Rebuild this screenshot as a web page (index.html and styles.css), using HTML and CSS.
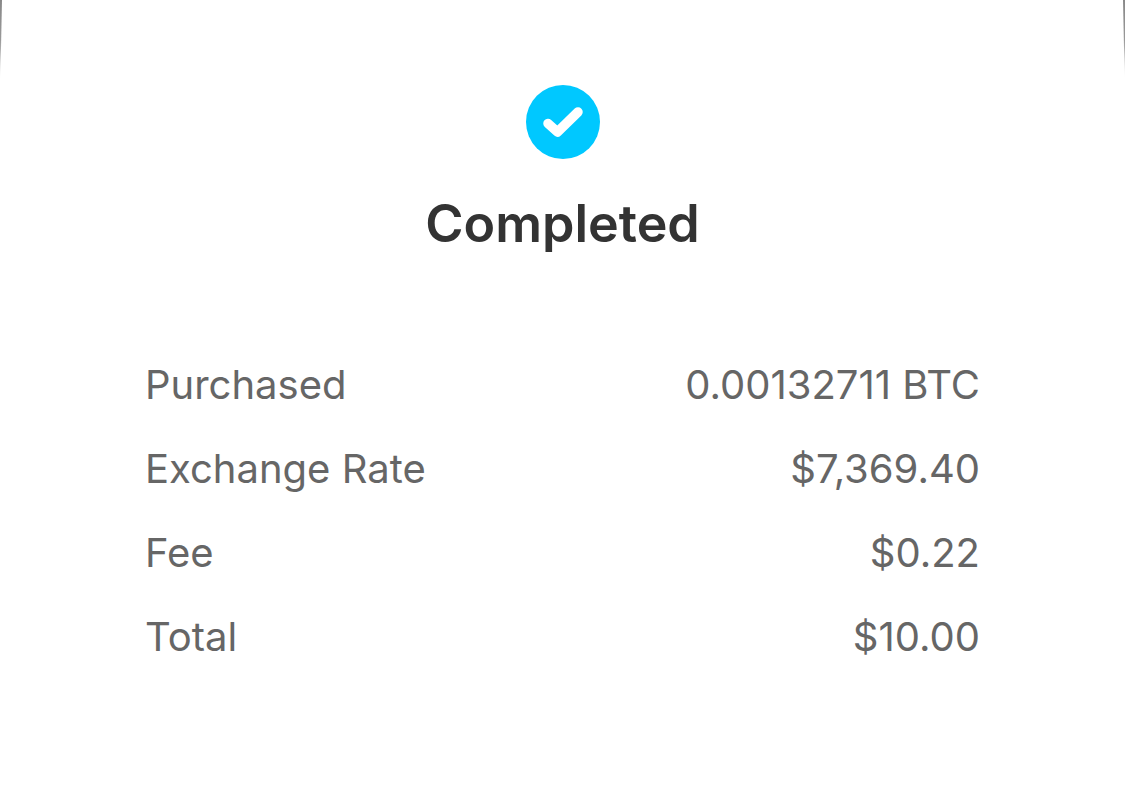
FILE: index.html
```
<!DOCTYPE html>
<html lang="en">
<head>
<meta charset="utf-8">
<meta name="viewport" content="width=device-width, initial-scale=1">
<title>Completed</title>
<link rel="stylesheet" href="styles.css">
</head>
<body>
<main class="sheet">
  <div class="edge edge-left"></div>
  <div class="edge edge-right"></div>
  <header class="status">
    <svg class="status-icon" viewBox="0 0 74 74" aria-hidden="true">
      <circle cx="37" cy="37" r="37" fill="#00c8ff"/>
      <path d="M22 38.500L31.500 47L52 27" fill="none" stroke="#fff" stroke-width="9.500" stroke-linecap="round" stroke-linejoin="round"/>
    </svg>
    <h1 class="title">Completed</h1>
  </header>
  <dl class="details">
    <div class="row"><dt>Purchased</dt><dd>0.00132711 BTC</dd></div>
    <div class="row"><dt>Exchange Rate</dt><dd>$7,369.40</dd></div>
    <div class="row"><dt>Fee</dt><dd>$0.22</dd></div>
    <div class="row"><dt>Total</dt><dd>$10.00</dd></div>
  </dl>
</main>
</body>
</html>
```
FILE: styles.css
```
body {
  margin: 0;
  background: #fff;
  font-family: Inter, "Liberation Sans", sans-serif;
}
.sheet {
  position: relative;
  min-height: 100vh;
  box-sizing: border-box;
  padding: 85px 145px;
}
.edge {
  position: absolute;
  top: 0;
  width: 2px;
  height: 80px;
  background: linear-gradient(#888, #999 50%, #fff);
}
.edge-left {
  left: 0;
  clip-path: polygon(0 0, 100% 0, 50% 60%, 0 100%);
}
.edge-right {
  right: 0;
  clip-path: polygon(0 0, 100% 0, 100% 100%, 50% 60%);
}
.status {
  display: flex;
  flex-direction: column;
  align-items: center;
  gap: 33px;
}
.status-icon {
  width: 74px;
  height: 74px;
}
.title {
  margin: 0;
  color: #333;
  font-size: 52px;
  line-height: 64px;
  font-weight: 600;
}
.details {
  display: flex;
  flex-direction: column;
  gap: 36px;
  margin: 105px 0 0;
  color: #666;
  font-size: 40px;
  line-height: 48px;
}
.row {
  display: flex;
  justify-content: space-between;
}
.row dd { margin: 0; }
```
